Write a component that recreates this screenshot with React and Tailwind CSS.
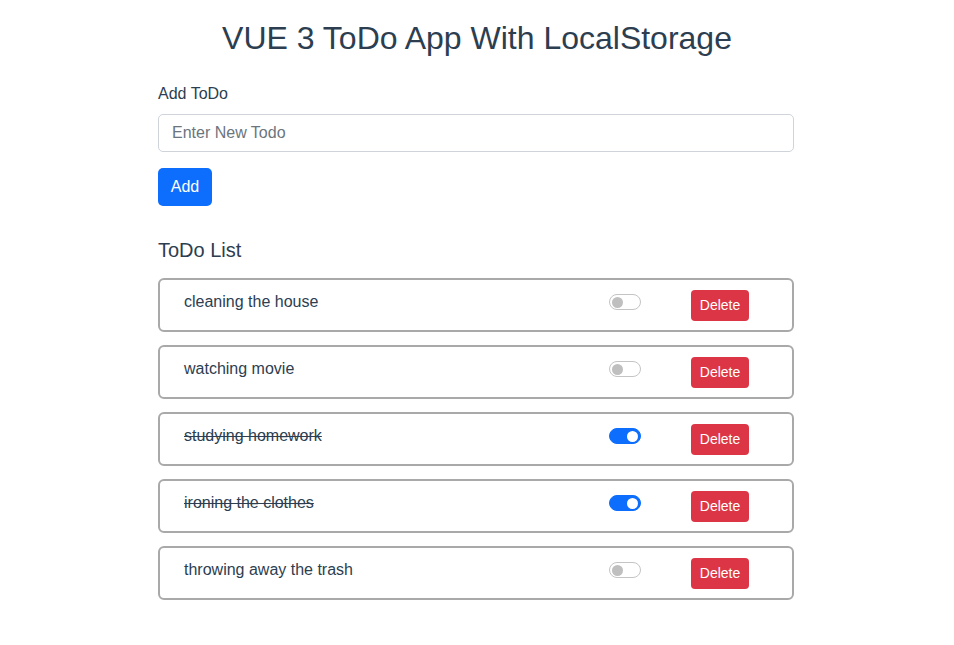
import React, { useState } from "react";

const initialTodos = [
  { id: 1, text: "cleaning the house", done: false },
  { id: 2, text: "watching movie", done: false },
  { id: 3, text: "studying homework", done: true },
  { id: 4, text: "ironing the clothes", done: true },
  { id: 5, text: "throwing away the trash", done: false },
];

const Switch = ({ checked, onChange }) => (
  <button
    onClick={onChange}
    className={`mt-[4px] w-[32px] h-[16px] rounded-full border flex items-center px-[2px] ${
      checked ? "bg-[#0d6efd] border-[#0d6efd] justify-end" : "bg-white border-[#c4c4c4] justify-start"
    }`}
  >
    <span className={`w-[11px] h-[11px] rounded-full ${checked ? "bg-white" : "bg-[#bfbfbf]"}`} />
  </button>
);

export default function App() {
  const [todos, setTodos] = useState(initialTodos);
  const [newTodo, setNewTodo] = useState("");

  const addTodo = () => {
    if (!newTodo.trim()) return;
    setTodos([...todos, { id: Date.now(), text: newTodo, done: false }]);
    setNewTodo("");
  };

  const toggle = (id) =>
    setTodos(todos.map((t) => (t.id === id ? { ...t, done: !t.done } : t)));

  const remove = (id) => setTodos(todos.filter((t) => t.id !== id));

  return (
    <div className="min-h-screen bg-white text-[#2c3e50] font-['Liberation_Sans',Arial,sans-serif] pr-[2px]">
      <h1 className="pt-[19px] pl-[2px] text-center text-[32px] leading-[38px]">
        VUE 3 ToDo App With LocalStorage
      </h1>

      <div className="w-[636px] mx-auto">
        {/* Add form */}
        <div className="mt-[25px]">
          <label className="block text-[16px] leading-[24px] mb-[8px]">Add ToDo</label>
          <input
            value={newTodo}
            onChange={(e) => setNewTodo(e.target.value)}
            placeholder="Enter New Todo"
            className="w-full h-[38px] px-[13px] text-[16px] border border-[#ced4da] rounded-[5px] placeholder:text-[#6c757d] outline-none"
          />
          <button
            onClick={addTodo}
            className="mt-[16px] h-[38px] w-[54px] bg-[#0d6efd] text-white text-[16px] rounded-[5px]"
          >
            Add
          </button>
        </div>

        {/* List */}
        <h5 className="mt-[32px] text-[20px] leading-[24px]">ToDo List</h5>
        <div className="mt-[16px] flex flex-col gap-[13px]">
          {todos.map((todo) => (
            <div
              key={todo.id}
              className="h-[54px] border-2 border-[#a9a9a9] rounded-[6px] flex items-start pt-[10px]"
            >
              <p
                className={`flex-1 pl-[24px] text-[16px] leading-[24px] ${
                  todo.done ? "line-through" : ""
                }`}
              >
                {todo.text}
              </p>
              <Switch checked={todo.done} onChange={() => toggle(todo.id)} />
              <button
                onClick={() => remove(todo.id)}
                className="ml-[50px] mr-[43px] w-[58px] h-[31px] bg-[#dc3545] text-white text-[14px] rounded-[4px]"
              >
                Delete
              </button>
            </div>
          ))}
        </div>
      </div>
    </div>
  );
}
